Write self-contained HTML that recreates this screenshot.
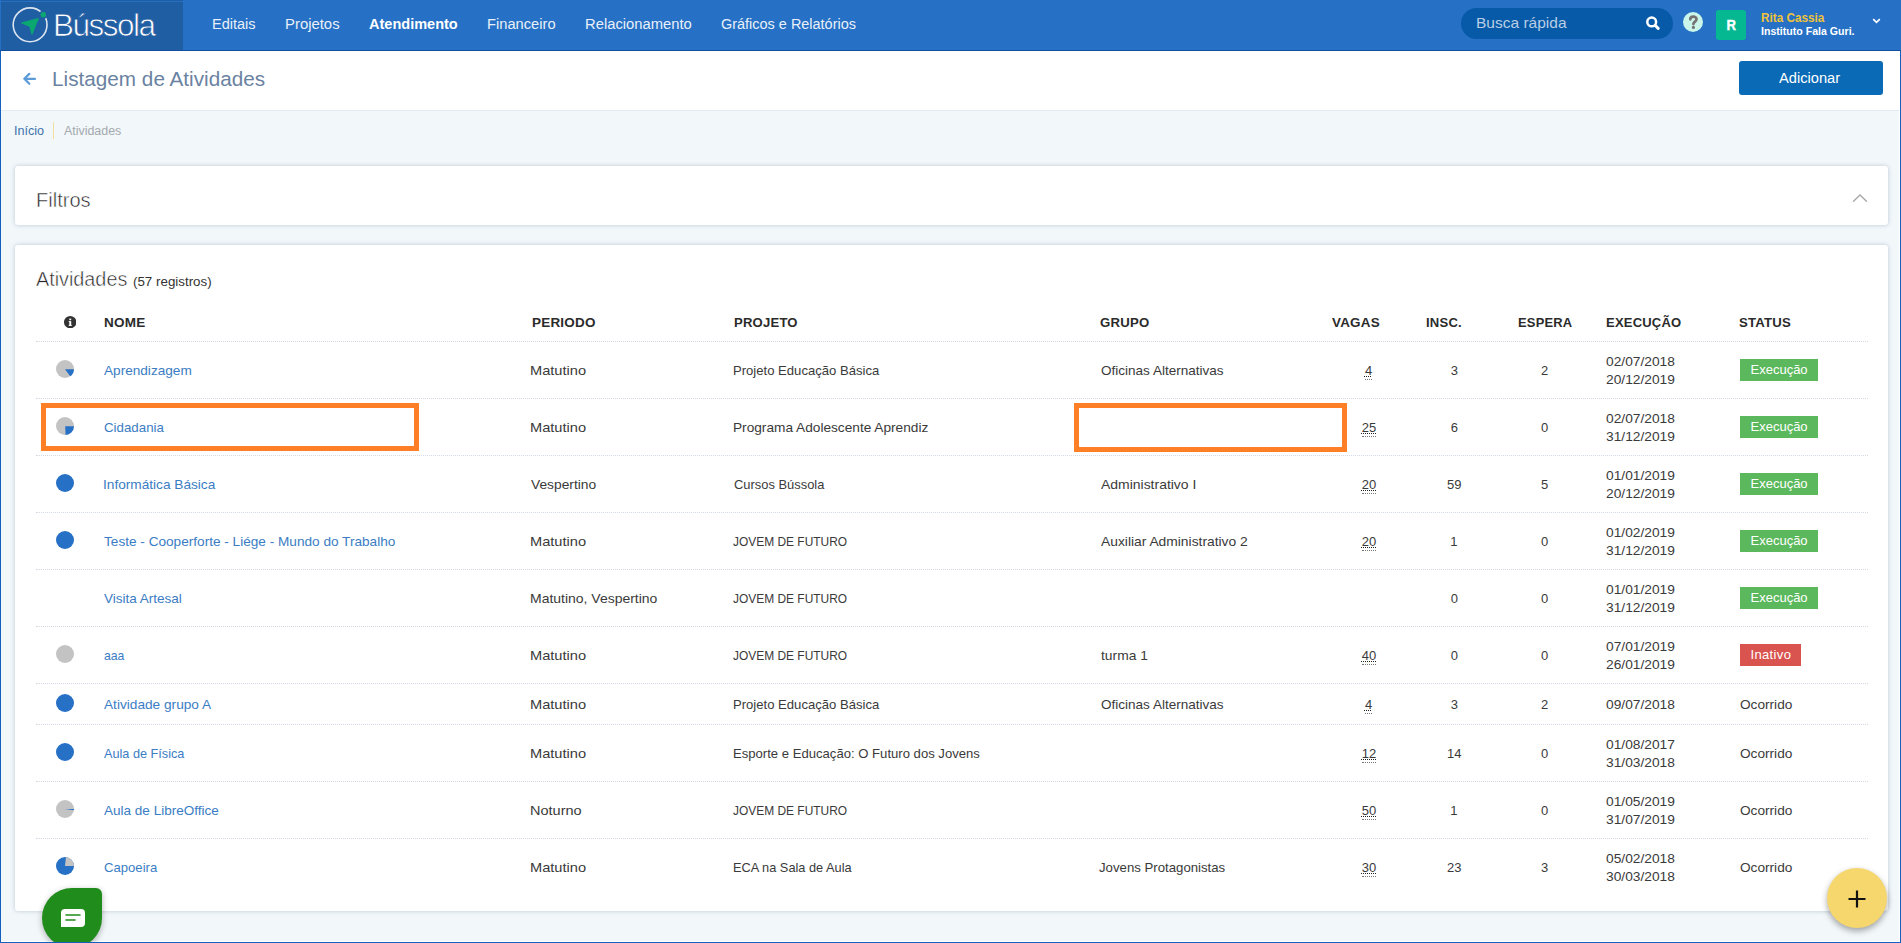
<!DOCTYPE html>
<html lang="pt-br"><head><meta charset="utf-8"><title>Bússola - Listagem de Atividades</title>
<style>
*{box-sizing:border-box;margin:0;padding:0}
html,body{width:1901px;height:943px;overflow:hidden;background:#f2f7fa;font-family:"Liberation Sans",sans-serif;color:#333}
body{position:relative}
.abs{position:absolute}
#frame{position:absolute;left:0;top:51px;width:1901px;height:892px;border:1px solid #1560bd;border-top:0;z-index:50;pointer-events:none}
#frame2{position:absolute;left:1899px;top:51px;width:1px;height:891px;background:#fff;z-index:48}
#frame3{position:absolute;left:1px;top:941px;width:1899px;height:1px;background:#fff;z-index:48}
#nav{position:absolute;left:0;top:0;width:1901px;height:51px;background:#2670c5;border-bottom:1px solid #0f4f9e}
#logo{position:absolute;left:1px;top:0;width:182px;height:50px;background:#1f5ea3}
#logoline{position:absolute;left:0;top:1px;width:183px;height:1px;background:#2670c5}
#logotxt{position:absolute;left:52px;top:5.3px;font-size:31.5px;line-height:40px;color:#fff;letter-spacing:-1.5px;font-weight:400;-webkit-text-stroke:0.75px #1f5ea3}
.mi{position:absolute;font-size:14px;color:#e9f0f9;white-space:nowrap}
.mi.b{color:#fff}
.mi.b{font-weight:700}
#search{position:absolute;left:1461px;top:8px;width:212px;height:31px;border-radius:16px;background:#075aa8}
.ph{position:absolute;font-size:15px;color:#b9cee5;white-space:nowrap}
#help{position:absolute;left:1683px;top:12px;width:20px;height:20px;border-radius:50%;background:#c9f5ea;color:#6e6a69;font-weight:700;font-size:17px;line-height:21px;text-align:center}
#avatar{position:absolute;left:1716px;top:10px;width:30px;height:30px;border-radius:3px;background:#06b892;color:#fff;font-weight:700;font-size:14.5px;line-height:31.4px;text-align:center}
.uname{position:absolute;font-size:12px;font-weight:700;color:#f0c23b;white-space:nowrap}
.uorg{position:absolute;font-size:11px;font-weight:700;color:#fff;white-space:nowrap}
#titlebar{position:absolute;left:0;top:51px;width:1901px;height:60px;background:#fff;border-bottom:1px solid #e4ebf1}
.title{position:absolute;font-size:20.5px;color:#6a82a1;white-space:nowrap}
#addbtn{position:absolute;left:1739px;top:61px;width:144px;height:34px;border-radius:3px;background:#0a6ab6}
.btxt{position:absolute;font-size:14px;color:#fff;white-space:nowrap}
.bc1{position:absolute;font-size:12px;color:#3d72ad;white-space:nowrap}
#bcsep{position:absolute;left:53px;top:122px;width:1px;height:17px;background:#f5dfa0}
.bc2{position:absolute;font-size:12px;color:#a4a9ae;white-space:nowrap}
.card{position:absolute;background:#fff;border-radius:3px;box-shadow:0 0 4px rgba(120,140,170,.45)}
#c1{left:15px;top:166px;width:1873px;height:59px}
#c2{left:15px;top:245px;width:1873px;height:666px}
.h2{position:absolute;font-size:20px;color:#262626;white-space:nowrap;-webkit-text-stroke:0.5px #fff}
.h2s{position:absolute;font-size:12px;color:#333;white-space:nowrap}
.th{position:absolute;font-size:12.5px;line-height:18px;font-weight:700;color:#2b2b2b;white-space:nowrap;letter-spacing:.2px}
.sep{position:absolute;left:36px;width:1832px;height:1px;background:repeating-linear-gradient(90deg,#d3dae4 0,#d3dae4 1px,transparent 1px,transparent 2px) 1px 0/100% 1px no-repeat,linear-gradient(#d3dae4,#d3dae4) 0 0/1px 1px no-repeat}
.c{position:absolute;white-space:nowrap;font-size:13px}
.lnk{color:#3b7dc4}
.tx{color:#3a3a3a}
.num{width:60px;text-align:center}
.abs-u{border-bottom:1px dotted #777;line-height:16px;display:inline-block;text-decoration:underline dotted #222;text-decoration-thickness:1px;text-underline-offset:1px}
.dt{line-height:18px}
.badge{position:absolute;height:22px;line-height:22px;font-size:13px;color:#fff;padding:0 0 0 10.5px;white-space:nowrap}
.badge.ex{background:#5cb85c;width:78px}
.badge.in{background:#d9534f;width:61px;letter-spacing:.35px}
.pie{position:absolute}
.obox{position:absolute;border:5px solid #ff7f27}
#fab{position:absolute;left:1827px;top:868px;width:60px;height:60px;border-radius:50%;background:#f5d76e;box-shadow:0 3px 6px rgba(0,0,0,.35)}
#chat{position:absolute;left:42px;top:888px;width:60px;height:60px;background:#1f8c1b;border-radius:50% 10% 50% 50% / 50% 10% 50% 50%;box-shadow:0 2px 6px rgba(0,0,0,.3);z-index:49}
</style></head><body>
<div id="nav">
 <div id="logo">
  <svg class="abs" style="left:10px;top:5px" width="40" height="40" viewBox="0 0 40 40">
   <circle cx="19.1" cy="19.8" r="16.9" fill="none" stroke="#dbe4ef" stroke-width="1.6"/>
   <circle cx="32.3" cy="9.8" r="4.3" fill="#1f5ea3"/>
   <circle cx="32.3" cy="9.8" r="2.7" fill="#0aa870"/>
   <path d="M10.6 17.9 L27.3 13.5 L21 29.3 L18.9 21.5 Z" fill="#0aa870" stroke="#0aa870" stroke-width="1" stroke-linejoin="round"/>
  </svg>
  <div id="logotxt">Bússola</div>
 </div>
 <div id="logoline"></div>
 <div id="search">
  <svg class="abs" style="left:184px;top:8px" width="16" height="16" viewBox="0 0 16 16"><circle cx="6.7" cy="5.9" r="4.4" fill="none" stroke="#fff" stroke-width="2.5"/><path d="M10.3 9.5 L13.2 12.4" stroke="#fff" stroke-width="3" stroke-linecap="round"/></svg>
 </div>
 <div id="help"><svg class="abs" style="left:0;top:0" width="20" height="20" viewBox="0 0 20 20"><path d="M7.3 7.3 C7.3 3.7 13.5 3.7 13.5 7.2 C13.5 9.7 10.4 9.6 10.4 12.1" fill="none" stroke="#757271" stroke-width="2.7" stroke-linecap="round"/><circle cx="10.4" cy="15.4" r="1.55" fill="#757271"/></svg></div>
 <div id="avatar"><span style="display:inline-block;transform:scaleX(.9);-webkit-text-stroke:.4px #fff">R</span></div>
 <svg class="abs" style="left:1872px;top:18px" width="9" height="6" viewBox="0 0 9 6"><path d="M1.2 1.2 L4.5 4.3 L7.8 1.2" fill="none" stroke="#fff" stroke-width="1.7"/></svg>
</div>
<div id="titlebar"></div>
<svg class="abs" style="left:22px;top:72px" width="15" height="14" viewBox="0 0 15 14"><path d="M13 6.8 H2.4 M7.3 1.9 L2.3 6.8 L7.3 11.8" fill="none" stroke="#5a9bd8" stroke-width="2.2" stroke-linecap="round" stroke-linejoin="round"/></svg>
<div id="addbtn"></div>
<div id="bcsep"></div>

<div class="card" id="c1"></div>
<svg class="abs" style="left:1852px;top:193px" width="16" height="10" viewBox="0 0 16 10"><path d="M1.5 8.3 L8 1.9 L14.5 8.3" fill="none" stroke="#a8a8a8" stroke-width="1.4" stroke-linecap="round" stroke-linejoin="round"/></svg>

<div class="card" id="c2"></div>

<svg class="abs" style="left:63.8px;top:315.9px" width="12.4" height="12.4" viewBox="0 0 12.4 12.4"><circle cx="6.2" cy="6.2" r="6.2" fill="#333"/><rect x="5.3" y="2.6" width="1.9" height="1.6" fill="#fff"/><rect x="5.3" y="5.1" width="1.9" height="4.5" fill="#fff"/><rect x="4.7" y="8.9" width="3.1" height="1" fill="#fff"/><rect x="4.7" y="5.1" width="1.5" height="0.9" fill="#fff"/></svg>
<div class="sep" style="top:341px"></div>
<svg class="pie" style="left:56px;top:360px" width="18" height="18" viewBox="0 0 18 18"><circle cx="9" cy="9" r="9" fill="#c3c3c3"/><path d="M9 9.2 L18 9.2 A9 9 0 0 1 14.29 16.28 Z" fill="#2670c5"/></svg>
<div class="badge ex" style="left:1740px;top:359px">Execução</div>
<div class="sep" style="top:398px"></div>
<svg class="pie" style="left:56px;top:417px" width="18" height="18" viewBox="0 0 18 18"><circle cx="9" cy="9" r="9" fill="#c3c3c3"/><path d="M9.2 9.2 L18 9.2 A9 9 0 0 1 9.6 17.98 Z" fill="#2670c5"/></svg>
<div class="badge ex" style="left:1740px;top:416px">Execução</div>
<div class="sep" style="top:455px"></div>
<svg class="pie" style="left:56px;top:474px" width="18" height="18" viewBox="0 0 18 18"><circle cx="9" cy="9" r="9" fill="#2670c5"/></svg>
<div class="badge ex" style="left:1740px;top:473px">Execução</div>
<div class="sep" style="top:512px"></div>
<svg class="pie" style="left:56px;top:531px" width="18" height="18" viewBox="0 0 18 18"><circle cx="9" cy="9" r="9" fill="#2670c5"/></svg>
<div class="badge ex" style="left:1740px;top:530px">Execução</div>
<div class="sep" style="top:569px"></div>

<div class="badge ex" style="left:1740px;top:587px">Execução</div>
<div class="sep" style="top:626px"></div>
<svg class="pie" style="left:56px;top:645px" width="18" height="18" viewBox="0 0 18 18"><circle cx="9" cy="9" r="9" fill="#c3c3c3"/></svg>
<div class="badge in" style="left:1740px;top:644px">Inativo</div>
<div class="sep" style="top:683px"></div>
<svg class="pie" style="left:56px;top:694px" width="18" height="18" viewBox="0 0 18 18"><circle cx="9" cy="9" r="9" fill="#2670c5"/></svg>
<div class="sep" style="top:724px"></div>
<svg class="pie" style="left:56px;top:743px" width="18" height="18" viewBox="0 0 18 18"><circle cx="9" cy="9" r="9" fill="#2670c5"/></svg>
<div class="sep" style="top:781px"></div>
<svg class="pie" style="left:56px;top:800px" width="18" height="18" viewBox="0 0 18 18"><circle cx="9" cy="9" r="9" fill="#c3c3c3"/><path d="M9 9 L18 9 A9 9 0 0 1 17.9 10.13 Z" fill="#2670c5"/></svg>
<div class="sep" style="top:838px"></div>
<svg class="pie" style="left:56px;top:857px" width="18" height="18" viewBox="0 0 18 18"><circle cx="9" cy="9" r="9" fill="#2670c5"/><path d="M9 9 L9.94 0.05 A9 9 0 0 1 18 9 Z" fill="#c3c3c3"/></svg>
<div id="t0" class="th" style="left:104.00px;transform-origin:0 50%;transform:scaleX(1.0817);top:314px;height:18px;line-height:18px">NOME</div>
<div id="t1" class="th" style="left:531.80px;transform-origin:0 50%;transform:scaleX(1.0778);top:314px;height:18px;line-height:18px">PERIODO</div>
<div id="t2" class="th" style="left:733.80px;transform-origin:0 50%;transform:scaleX(1.0468);top:314px;height:18px;line-height:18px">PROJETO</div>
<div id="t3" class="th" style="left:1100.00px;transform-origin:0 50%;transform:scaleX(1.0533);top:314px;height:18px;line-height:18px">GRUPO</div>
<div id="t4" class="th" style="left:1331.80px;transform-origin:0 50%;transform:scaleX(1.0740);top:314px;height:18px;line-height:18px">VAGAS</div>
<div id="t5" class="th" style="left:1425.60px;transform-origin:0 50%;transform:scaleX(1.0461);top:314px;height:18px;line-height:18px">INSC.</div>
<div id="t6" class="th" style="left:1517.60px;transform-origin:0 50%;transform:scaleX(1.0327);top:314px;height:18px;line-height:18px">ESPERA</div>
<div id="t7" class="th" style="left:1606.40px;transform-origin:0 50%;transform:scaleX(1.0403);top:314px;height:18px;line-height:18px">EXECUÇÃO</div>
<div id="t8" class="th" style="left:1739.20px;transform-origin:0 50%;transform:scaleX(1.0531);top:314px;height:18px;line-height:18px">STATUS</div>
<div id="t9" class="title" style="left:51.80px;transform-origin:0 50%;transform:scaleX(1.0110);top:63.9px;height:30px;line-height:30px">Listagem de Atividades</div>
<div id="t10" class="bc1" style="left:14.00px;transform-origin:0 50%;transform:scaleX(1.0507);top:122.6px;height:16px;line-height:16px">Início</div>
<div id="t11" class="bc2" style="left:63.80px;transform-origin:0 50%;transform:scaleX(1.0347);top:122.6px;height:16px;line-height:16px">Atividades</div>
<div id="t12" class="btxt" style="left:1778.80px;transform-origin:0 50%;transform:scaleX(1.0458);top:67.9px;height:20px;line-height:20px">Adicionar</div>
<div id="t13" class="h2" style="left:36.40px;transform-origin:0 50%;transform:scaleX(1.0020);top:185.8px;height:28px;line-height:28px">Filtros</div>
<div id="t14" class="h2" style="left:36.20px;transform-origin:0 50%;transform:scaleX(0.9891);top:264.7px;height:28px;line-height:28px">Atividades</div>
<div id="t15" class="h2s" style="left:132.60px;transform-origin:0 50%;transform:scaleX(1.1129);top:273.6px;height:16px;line-height:16px">(57 registros)</div>
<div id="t16" class="ph" style="left:1475.80px;transform-origin:0 50%;transform:scaleX(1.0345);top:12.5px;height:20px;line-height:20px">Busca rápida</div>
<div id="t17" class="uname" style="left:1760.80px;transform-origin:0 50%;transform:scaleX(0.9788);top:10.6px;height:14px;line-height:14px">Rita Cassia</div>
<div id="t18" class="uorg" style="left:1760.80px;transform-origin:0 50%;transform:scaleX(0.9627);top:24.2px;height:14px;line-height:14px">Instituto Fala Guri.</div>
<div id="t19" class="mi" style="left:211.60px;transform-origin:0 50%;transform:scaleX(1.0361);top:0px;height:48px;line-height:48px">Editais</div>
<div id="t20" class="mi" style="left:284.60px;transform-origin:0 50%;transform:scaleX(1.0629);top:0px;height:48px;line-height:48px">Projetos</div>
<div id="t21" class="mi b" style="left:369.20px;transform-origin:0 50%;transform:scaleX(1.0373);top:0px;height:48px;line-height:48px">Atendimento</div>
<div id="t22" class="mi" style="left:487.20px;transform-origin:0 50%;transform:scaleX(1.0493);top:0px;height:48px;line-height:48px">Financeiro</div>
<div id="t23" class="mi" style="left:584.80px;transform-origin:0 50%;transform:scaleX(1.0550);top:0px;height:48px;line-height:48px">Relacionamento</div>
<div id="t24" class="mi" style="left:721.40px;transform-origin:0 50%;transform:scaleX(1.0323);top:0px;height:48px;line-height:48px">Gráficos e Relatórios</div>
<div id="t25" class="c lnk" style="left:104.20px;transform-origin:0 50%;transform:scaleX(1.0465);top:342px;height:57px;line-height:57px">Aprendizagem</div>
<div id="t26" class="c tx" style="left:530.20px;transform-origin:0 50%;transform:scaleX(1.1246);top:342px;height:57px;line-height:57px">Matutino</div>
<div id="t27" class="c tx" style="left:732.60px;transform-origin:0 50%;transform:scaleX(1.0069);top:342px;height:57px;line-height:57px">Projeto Educação Básica</div>
<div id="t28" class="c tx" style="left:1100.60px;transform-origin:0 50%;transform:scaleX(1.0411);top:342px;height:57px;line-height:57px">Oficinas Alternativas</div>
<div id="t29" class="c tx" style="left:1353.60px;width:30px;text-align:center;transform-origin:50% 50%;top:342px;height:57px;line-height:57px"><span class="abs-u">4</span></div>
<div id="t30" class="c tx" style="left:1439.30px;width:30px;text-align:center;transform-origin:50% 50%;top:342px;height:57px;line-height:57px">3</div>
<div id="t31" class="c tx" style="left:1529.50px;width:30px;text-align:center;transform-origin:50% 50%;top:342px;height:57px;line-height:57px">2</div>
<div id="t32" class="c tx" style="left:1606.40px;transform-origin:0 50%;transform:scaleX(1.0585);top:353px;height:18px;line-height:18px">02/07/2018</div>
<div id="t33" class="c tx" style="left:1606.40px;transform-origin:0 50%;transform:scaleX(1.0585);top:371px;height:18px;line-height:18px">20/12/2019</div>
<div id="t34" class="c lnk" style="left:104.20px;transform-origin:0 50%;transform:scaleX(1.0226);top:399px;height:57px;line-height:57px">Cidadania</div>
<div id="t35" class="c tx" style="left:530.20px;transform-origin:0 50%;transform:scaleX(1.1246);top:399px;height:57px;line-height:57px">Matutino</div>
<div id="t36" class="c tx" style="left:732.60px;transform-origin:0 50%;transform:scaleX(1.0514);top:399px;height:57px;line-height:57px">Programa Adolescente Aprendiz</div>
<div id="t37" class="c tx" style="left:1354.10px;width:30px;text-align:center;transform-origin:50% 50%;top:399px;height:57px;line-height:57px"><span class="abs-u">25</span></div>
<div id="t38" class="c tx" style="left:1439.30px;width:30px;text-align:center;transform-origin:50% 50%;top:399px;height:57px;line-height:57px">6</div>
<div id="t39" class="c tx" style="left:1529.50px;width:30px;text-align:center;transform-origin:50% 50%;top:399px;height:57px;line-height:57px">0</div>
<div id="t40" class="c tx" style="left:1606.40px;transform-origin:0 50%;transform:scaleX(1.0585);top:410px;height:18px;line-height:18px">02/07/2018</div>
<div id="t41" class="c tx" style="left:1606.40px;transform-origin:0 50%;transform:scaleX(1.0585);top:428px;height:18px;line-height:18px">31/12/2019</div>
<div id="t42" class="c lnk" style="left:103.20px;transform-origin:0 50%;transform:scaleX(1.0496);top:456px;height:57px;line-height:57px">Informática Básica</div>
<div id="t43" class="c tx" style="left:531.20px;transform-origin:0 50%;transform:scaleX(1.0614);top:456px;height:57px;line-height:57px">Vespertino</div>
<div id="t44" class="c tx" style="left:733.60px;transform-origin:0 50%;transform:scaleX(0.9924);top:456px;height:57px;line-height:57px">Cursos Bússola</div>
<div id="t45" class="c tx" style="left:1100.60px;transform-origin:0 50%;transform:scaleX(1.0731);top:456px;height:57px;line-height:57px">Administrativo I</div>
<div id="t46" class="c tx" style="left:1354.10px;width:30px;text-align:center;transform-origin:50% 50%;top:456px;height:57px;line-height:57px"><span class="abs-u">20</span></div>
<div id="t47" class="c tx" style="left:1439.30px;width:30px;text-align:center;transform-origin:50% 50%;top:456px;height:57px;line-height:57px">59</div>
<div id="t48" class="c tx" style="left:1529.50px;width:30px;text-align:center;transform-origin:50% 50%;top:456px;height:57px;line-height:57px">5</div>
<div id="t49" class="c tx" style="left:1606.40px;transform-origin:0 50%;transform:scaleX(1.0585);top:467px;height:18px;line-height:18px">01/01/2019</div>
<div id="t50" class="c tx" style="left:1606.40px;transform-origin:0 50%;transform:scaleX(1.0585);top:485px;height:18px;line-height:18px">20/12/2019</div>
<div id="t51" class="c lnk" style="left:104.20px;transform-origin:0 50%;transform:scaleX(1.0471);top:513px;height:57px;line-height:57px">Teste - Cooperforte - Liége - Mundo do Trabalho</div>
<div id="t52" class="c tx" style="left:530.20px;transform-origin:0 50%;transform:scaleX(1.1246);top:513px;height:57px;line-height:57px">Matutino</div>
<div id="t53" class="c tx" style="left:733.00px;transform-origin:0 50%;transform:scaleX(0.9186);top:513px;height:57px;line-height:57px">JOVEM DE FUTURO</div>
<div id="t54" class="c tx" style="left:1100.60px;transform-origin:0 50%;transform:scaleX(1.0630);top:513px;height:57px;line-height:57px">Auxiliar Administrativo 2</div>
<div id="t55" class="c tx" style="left:1354.10px;width:30px;text-align:center;transform-origin:50% 50%;top:513px;height:57px;line-height:57px"><span class="abs-u">20</span></div>
<div id="t56" class="c tx" style="left:1438.80px;width:30px;text-align:center;transform-origin:50% 50%;top:513px;height:57px;line-height:57px">1</div>
<div id="t57" class="c tx" style="left:1529.50px;width:30px;text-align:center;transform-origin:50% 50%;top:513px;height:57px;line-height:57px">0</div>
<div id="t58" class="c tx" style="left:1606.40px;transform-origin:0 50%;transform:scaleX(1.0585);top:524px;height:18px;line-height:18px">01/02/2019</div>
<div id="t59" class="c tx" style="left:1606.40px;transform-origin:0 50%;transform:scaleX(1.0585);top:542px;height:18px;line-height:18px">31/12/2019</div>
<div id="t60" class="c lnk" style="left:104.20px;transform-origin:0 50%;transform:scaleX(1.0387);top:570px;height:57px;line-height:57px">Visita Artesal</div>
<div id="t61" class="c tx" style="left:530.20px;transform-origin:0 50%;transform:scaleX(1.0746);top:570px;height:57px;line-height:57px">Matutino, Vespertino</div>
<div id="t62" class="c tx" style="left:733.00px;transform-origin:0 50%;transform:scaleX(0.9186);top:570px;height:57px;line-height:57px">JOVEM DE FUTURO</div>
<div id="t63" class="c tx" style="left:1439.30px;width:30px;text-align:center;transform-origin:50% 50%;top:570px;height:57px;line-height:57px">0</div>
<div id="t64" class="c tx" style="left:1529.50px;width:30px;text-align:center;transform-origin:50% 50%;top:570px;height:57px;line-height:57px">0</div>
<div id="t65" class="c tx" style="left:1606.40px;transform-origin:0 50%;transform:scaleX(1.0585);top:581px;height:18px;line-height:18px">01/01/2019</div>
<div id="t66" class="c tx" style="left:1606.40px;transform-origin:0 50%;transform:scaleX(1.0585);top:599px;height:18px;line-height:18px">31/12/2019</div>
<div id="t67" class="c lnk" style="left:104.20px;transform-origin:0 50%;transform:scaleX(0.9410);top:627px;height:57px;line-height:57px">aaa</div>
<div id="t68" class="c tx" style="left:530.20px;transform-origin:0 50%;transform:scaleX(1.1246);top:627px;height:57px;line-height:57px">Matutino</div>
<div id="t69" class="c tx" style="left:733.00px;transform-origin:0 50%;transform:scaleX(0.9186);top:627px;height:57px;line-height:57px">JOVEM DE FUTURO</div>
<div id="t70" class="c tx" style="left:1100.60px;transform-origin:0 50%;transform:scaleX(1.0638);top:627px;height:57px;line-height:57px">turma 1</div>
<div id="t71" class="c tx" style="left:1354.10px;width:30px;text-align:center;transform-origin:50% 50%;top:627px;height:57px;line-height:57px"><span class="abs-u">40</span></div>
<div id="t72" class="c tx" style="left:1439.30px;width:30px;text-align:center;transform-origin:50% 50%;top:627px;height:57px;line-height:57px">0</div>
<div id="t73" class="c tx" style="left:1529.50px;width:30px;text-align:center;transform-origin:50% 50%;top:627px;height:57px;line-height:57px">0</div>
<div id="t74" class="c tx" style="left:1606.40px;transform-origin:0 50%;transform:scaleX(1.0585);top:638px;height:18px;line-height:18px">07/01/2019</div>
<div id="t75" class="c tx" style="left:1606.40px;transform-origin:0 50%;transform:scaleX(1.0585);top:656px;height:18px;line-height:18px">26/01/2019</div>
<div id="t76" class="c lnk" style="left:104.20px;transform-origin:0 50%;transform:scaleX(1.0510);top:684px;height:41px;line-height:41px">Atividade grupo A</div>
<div id="t77" class="c tx" style="left:530.20px;transform-origin:0 50%;transform:scaleX(1.1246);top:684px;height:41px;line-height:41px">Matutino</div>
<div id="t78" class="c tx" style="left:732.60px;transform-origin:0 50%;transform:scaleX(1.0069);top:684px;height:41px;line-height:41px">Projeto Educação Básica</div>
<div id="t79" class="c tx" style="left:1100.60px;transform-origin:0 50%;transform:scaleX(1.0411);top:684px;height:41px;line-height:41px">Oficinas Alternativas</div>
<div id="t80" class="c tx" style="left:1353.60px;width:30px;text-align:center;transform-origin:50% 50%;top:684px;height:41px;line-height:41px"><span class="abs-u">4</span></div>
<div id="t81" class="c tx" style="left:1439.30px;width:30px;text-align:center;transform-origin:50% 50%;top:684px;height:41px;line-height:41px">3</div>
<div id="t82" class="c tx" style="left:1529.50px;width:30px;text-align:center;transform-origin:50% 50%;top:684px;height:41px;line-height:41px">2</div>
<div id="t83" class="c tx" style="left:1606.40px;transform-origin:0 50%;transform:scaleX(1.0585);top:684px;height:41px;line-height:41px">09/07/2018</div>
<div id="t84" class="c tx" style="left:1739.60px;transform-origin:0 50%;transform:scaleX(1.0496);top:684px;height:41px;line-height:41px">Ocorrido</div>
<div id="t85" class="c lnk" style="left:104.20px;transform-origin:0 50%;transform:scaleX(0.9759);top:725px;height:57px;line-height:57px">Aula de Física</div>
<div id="t86" class="c tx" style="left:530.20px;transform-origin:0 50%;transform:scaleX(1.1246);top:725px;height:57px;line-height:57px">Matutino</div>
<div id="t87" class="c tx" style="left:732.60px;transform-origin:0 50%;transform:scaleX(1.0078);top:725px;height:57px;line-height:57px">Esporte e Educação: O Futuro dos Jovens</div>
<div id="t88" class="c tx" style="left:1354.10px;width:30px;text-align:center;transform-origin:50% 50%;top:725px;height:57px;line-height:57px"><span class="abs-u">12</span></div>
<div id="t89" class="c tx" style="left:1439.30px;width:30px;text-align:center;transform-origin:50% 50%;top:725px;height:57px;line-height:57px">14</div>
<div id="t90" class="c tx" style="left:1529.50px;width:30px;text-align:center;transform-origin:50% 50%;top:725px;height:57px;line-height:57px">0</div>
<div id="t91" class="c tx" style="left:1606.40px;transform-origin:0 50%;transform:scaleX(1.0585);top:736px;height:18px;line-height:18px">01/08/2017</div>
<div id="t92" class="c tx" style="left:1606.40px;transform-origin:0 50%;transform:scaleX(1.0585);top:754px;height:18px;line-height:18px">31/03/2018</div>
<div id="t93" class="c tx" style="left:1739.60px;transform-origin:0 50%;transform:scaleX(1.0496);top:725px;height:57px;line-height:57px">Ocorrido</div>
<div id="t94" class="c lnk" style="left:104.20px;transform-origin:0 50%;transform:scaleX(1.0406);top:782px;height:57px;line-height:57px">Aula de LibreOffice</div>
<div id="t95" class="c tx" style="left:530.20px;transform-origin:0 50%;transform:scaleX(1.1157);top:782px;height:57px;line-height:57px">Noturno</div>
<div id="t96" class="c tx" style="left:733.00px;transform-origin:0 50%;transform:scaleX(0.9186);top:782px;height:57px;line-height:57px">JOVEM DE FUTURO</div>
<div id="t97" class="c tx" style="left:1354.10px;width:30px;text-align:center;transform-origin:50% 50%;top:782px;height:57px;line-height:57px"><span class="abs-u">50</span></div>
<div id="t98" class="c tx" style="left:1438.80px;width:30px;text-align:center;transform-origin:50% 50%;top:782px;height:57px;line-height:57px">1</div>
<div id="t99" class="c tx" style="left:1529.50px;width:30px;text-align:center;transform-origin:50% 50%;top:782px;height:57px;line-height:57px">0</div>
<div id="t100" class="c tx" style="left:1606.40px;transform-origin:0 50%;transform:scaleX(1.0585);top:793px;height:18px;line-height:18px">01/05/2019</div>
<div id="t101" class="c tx" style="left:1606.40px;transform-origin:0 50%;transform:scaleX(1.0585);top:811px;height:18px;line-height:18px">31/07/2019</div>
<div id="t102" class="c tx" style="left:1739.60px;transform-origin:0 50%;transform:scaleX(1.0496);top:782px;height:57px;line-height:57px">Ocorrido</div>
<div id="t103" class="c lnk" style="left:104.20px;transform-origin:0 50%;transform:scaleX(1.0083);top:839px;height:57px;line-height:57px">Capoeira</div>
<div id="t104" class="c tx" style="left:530.20px;transform-origin:0 50%;transform:scaleX(1.1246);top:839px;height:57px;line-height:57px">Matutino</div>
<div id="t105" class="c tx" style="left:732.60px;transform-origin:0 50%;transform:scaleX(0.9825);top:839px;height:57px;line-height:57px">ECA na Sala de Aula</div>
<div id="t106" class="c tx" style="left:1098.80px;transform-origin:0 50%;transform:scaleX(1.0153);top:839px;height:57px;line-height:57px">Jovens Protagonistas</div>
<div id="t107" class="c tx" style="left:1354.10px;width:30px;text-align:center;transform-origin:50% 50%;top:839px;height:57px;line-height:57px"><span class="abs-u">30</span></div>
<div id="t108" class="c tx" style="left:1439.30px;width:30px;text-align:center;transform-origin:50% 50%;top:839px;height:57px;line-height:57px">23</div>
<div id="t109" class="c tx" style="left:1529.50px;width:30px;text-align:center;transform-origin:50% 50%;top:839px;height:57px;line-height:57px">3</div>
<div id="t110" class="c tx" style="left:1606.40px;transform-origin:0 50%;transform:scaleX(1.0585);top:850px;height:18px;line-height:18px">05/02/2018</div>
<div id="t111" class="c tx" style="left:1606.40px;transform-origin:0 50%;transform:scaleX(1.0585);top:868px;height:18px;line-height:18px">30/03/2018</div>
<div id="t112" class="c tx" style="left:1739.60px;transform-origin:0 50%;transform:scaleX(1.0496);top:839px;height:57px;line-height:57px">Ocorrido</div>
<div class="obox" style="left:41px;top:403px;width:378px;height:48px"></div>
<div class="obox" style="left:1074px;top:403px;width:273px;height:49px"></div>

<div id="chat"><svg class="abs" style="left:19px;top:21px" width="24" height="18" viewBox="0 0 24 18"><path d="M4 0 H20 Q24 0 24 4 V14 Q24 18 20 18 H0 V4 Q0 0 4 0 Z" fill="#fff"/><path d="M5 6 H19 M5 11 H14" stroke="#1f8c1b" stroke-width="1.6" stroke-linecap="round"/></svg></div>
<div id="fab"><svg class="abs" style="left:21px;top:22px" width="18" height="18" viewBox="0 0 18 18"><path d="M9 0.5 V17.5 M0.5 9 H17.5" stroke="#111" stroke-width="2.2"/></svg></div>
<div id="frame2"></div><div id="frame3"></div><div id="frame"></div>
</body></html>
